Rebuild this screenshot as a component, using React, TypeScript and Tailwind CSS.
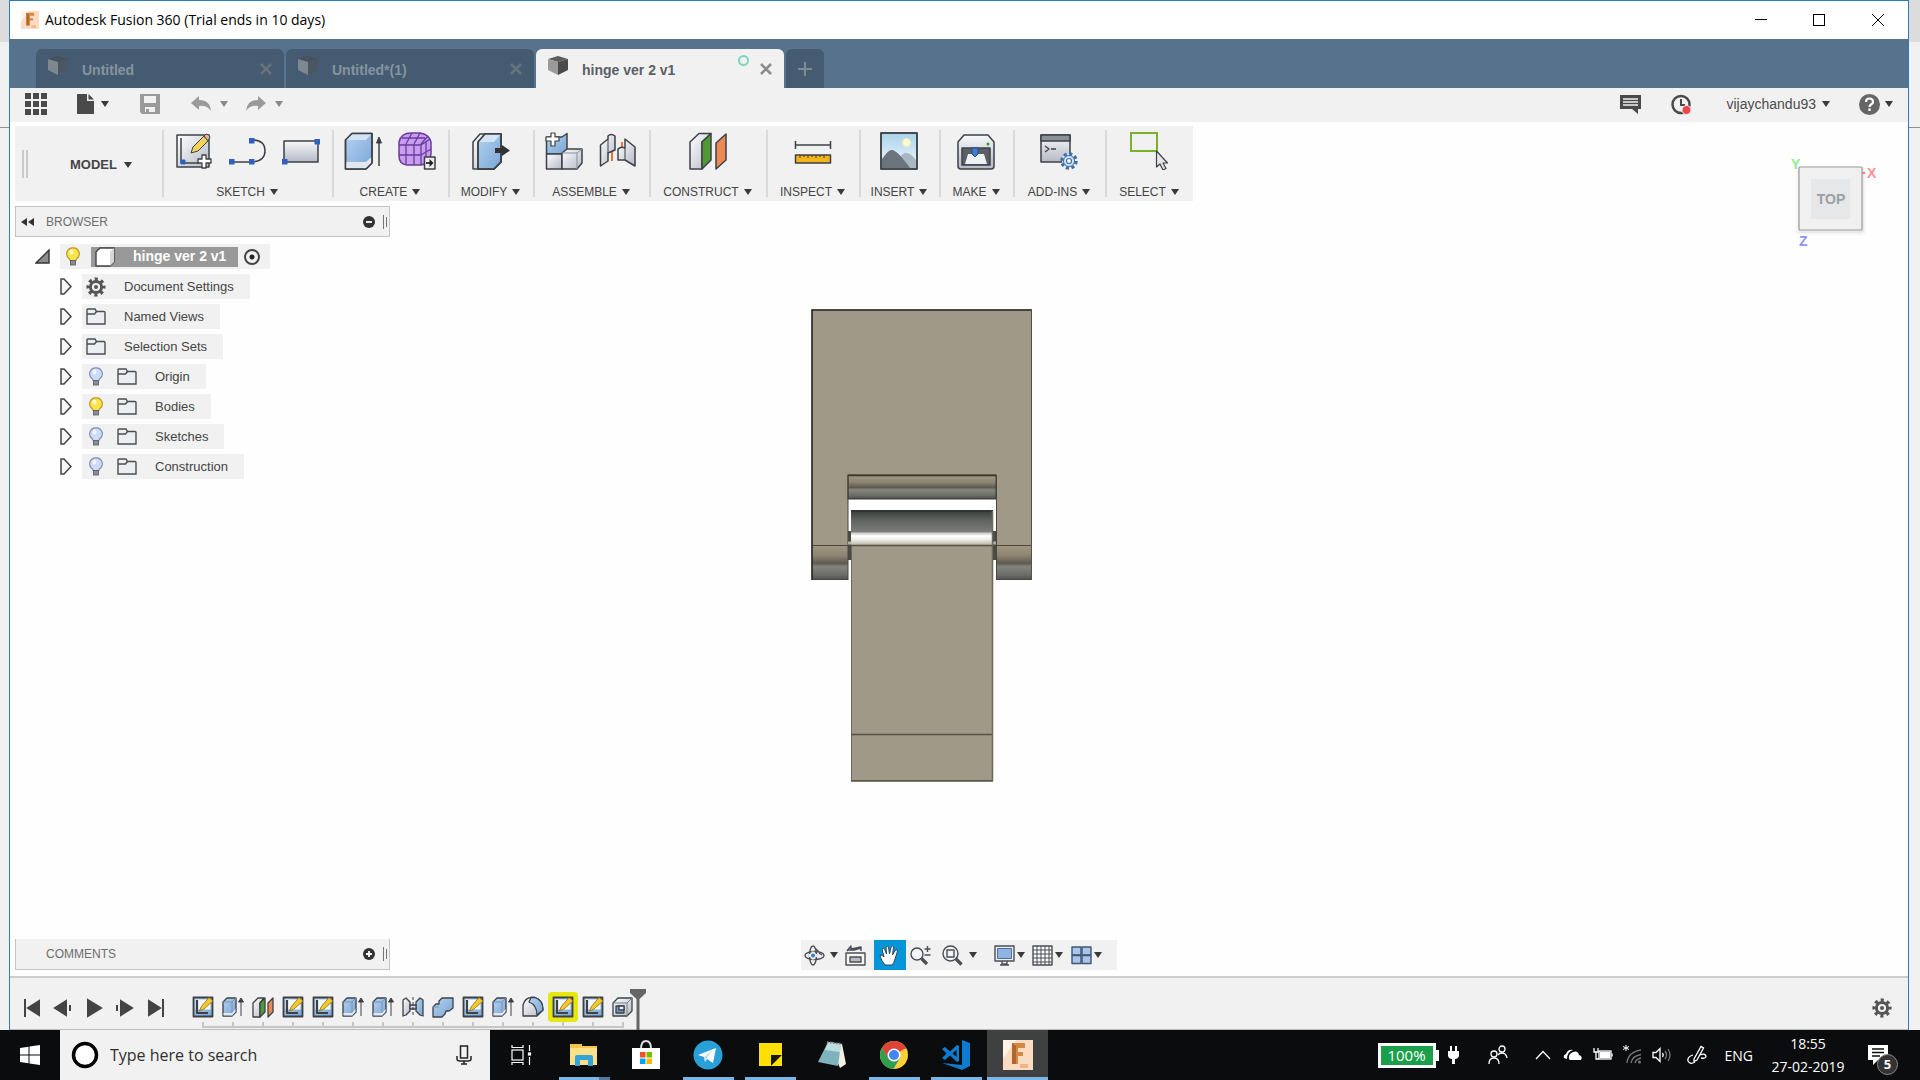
import React, { useState } from "react";

const INK = "#3d4147";

type IconProps = { className?: string };

const Defs = () => (
    <svg className="absolute h-0 w-0" aria-hidden="true">
        <defs>
            <linearGradient id="steel" x1="0" y1="0" x2="1" y2="1">
                <stop offset="0" stopColor="#ffffff" />
                <stop offset="1" stopColor="#b4b9c6" />
            </linearGradient>
            <linearGradient id="steelDown" x1="0" y1="0" x2="0" y2="1">
                <stop offset="0" stopColor="#f8f8fa" />
                <stop offset="1" stopColor="#b4b9c6" />
            </linearGradient>
            <linearGradient id="blue" x1="0" y1="0" x2="1" y2="1">
                <stop offset="0" stopColor="#b5d3ef" />
                <stop offset="1" stopColor="#79a5d6" />
            </linearGradient>
            <linearGradient id="sky" x1="0" y1="0" x2="0" y2="1">
                <stop offset="0" stopColor="#a9d3ec" />
                <stop offset="1" stopColor="#f2f8fa" />
            </linearGradient>
            <linearGradient id="ears" x1="0" y1="0" x2="0" y2="1">
                <stop offset="0" stopColor="#a39883" />
                <stop offset="0.3" stopColor="#8d8473" />
                <stop offset="0.52" stopColor="#5f5a50" />
                <stop offset="0.62" stopColor="#858580" />
                <stop offset="0.85" stopColor="#6c6d68" />
                <stop offset="1" stopColor="#4e504c" />
            </linearGradient>
            <linearGradient id="barrel" x1="0" y1="0" x2="0" y2="1">
                <stop offset="0" stopColor="#363b38" />
                <stop offset="0.3" stopColor="#626562" />
                <stop offset="0.6" stopColor="#7b7c79" />
                <stop offset="0.64" stopColor="#c9c8c4" />
                <stop offset="0.72" stopColor="#ffffff" />
                <stop offset="0.82" stopColor="#efeeea" />
                <stop offset="1" stopColor="#b3aa9a" />
            </linearGradient>
        </defs>
    </svg>
);

const Caret = ({ className = "fill-[#3a3a3a]" }: IconProps) => (
    <svg className={`h-[6px] w-[8px] shrink-0 ${className}`} viewBox="0 0 8 6">
        <path d="M0 0H8L4 6Z" />
    </svg>
);

/* ---------- ribbon icons, 38 x 38 ---------- */

const Big = ({ children }: { children: React.ReactNode }) => (
    <svg className="h-[38px] w-[38px]" viewBox="0 0 38 38" fill="none" stroke={INK} strokeWidth="1.5" strokeLinejoin="round">
        {children}
    </svg>
);

const SketchIcon = () => (
    <Big>
        <rect x="3" y="3" width="32" height="32" fill="url(#steel)" />
        <path d="M7 6V31H25" />
        <rect x="7" y="28" width="4" height="4" fill="#2f62c0" stroke="#2f62c0" strokeWidth="1" />
        <path d="M19 15L30 4L34 9L24 19L17 21Z" fill="#f3d25a" strokeWidth="1" />
        <path d="M30 4L32 2Q35 2 36 5L34 9Z" fill="#e9b39a" strokeWidth="1" />
        <path d="M28 23H32V27H37V31H32V36H28V31H24V27H28Z" fill="#fff" strokeWidth="1.3" />
    </Big>
);

const LineIcon = () => (
    <Big>
        <path d="M2 30H24Q37 29 37 19Q37 8 24 8" />
        <g fill="#2f62c0" stroke="none">
            <rect x="1" y="27" width="5.500" height="5.500" />
            <rect x="21" y="27" width="5.500" height="5.500" />
            <rect x="21" y="6" width="5.500" height="5.500" />
        </g>
    </Big>
);

const RectIcon = () => (
    <Big>
        <rect x="2" y="9" width="34" height="21" fill="url(#steelDown)" />
        <g fill="#2f62c0" stroke="none">
            <rect x="0" y="27" width="5.500" height="5.500" />
            <rect x="32.500" y="7" width="5.500" height="5.500" />
        </g>
    </Big>
);

const ExtrudeIcon = () => (
    <Big>
        <path d="M1.500 8L8 1.500H28V31L22 37H1.500Z" fill="url(#blue)" />
        <path d="M2 30H22L27.500 25V31L22 36.500H2Z" fill="#e3e7ee" stroke="none" />
        <path d="M1.500 8L8 1.500H28L22 8Z" fill="#d2e4f5" stroke="none" />
        <path d="M1.500 8L8 1.500H28V31L22 37H1.500Z" />
        <path d="M35 8V34" />
        <path d="M32.500 11L35 5L37.500 11Z" fill={INK} strokeWidth="1" />
    </Big>
);

const FormIcon = () => (
    <Big>
        <path d="M1 10Q3 1 13 1H22Q31 2 33 10V22Q32 32 23 33H9Q1 32 1 24Z" fill="#c79df0" stroke="#6c3b9c" />
        <path d="M1 13H23L32 7M1 23H23L33 17M8 12V33M16 12V33M23 12V33M8 12L14 1M16 12L22 1M23 12L30 4M28 9V30M4 6H27" stroke="#6c3b9c" strokeWidth="1.3" />
        <rect x="26.500" y="25" width="10.500" height="12" fill="#eee" />
        <path d="M28 31H33" strokeWidth="2" />
        <path d="M31.500 27L35.500 31L31.500 35Z" fill="#222" stroke="none" />
    </Big>
);

const PressPullIcon = () => (
    <Big>
        <path d="M1 10L8 2H29V30L22 37H1Z" fill="url(#steel)" />
        <path d="M6 10L13 2H29V30L22 37H6Z" fill="url(#blue)" />
        <path d="M6 10L13 2H29L22 10Z" fill="#d2e4f5" stroke="none" />
        <path d="M6 10L13 2H29V30L22 37H6Z" />
        <path d="M23 16H30V13L38 18.500L30 24V21H23Z" fill="#333" stroke="none" />
    </Big>
);

const NewComponentIcon = () => (
    <Big>
        <path d="M1.500 5H17L22 1.500V19L17 22H1.500Z" fill="url(#blue)" />
        <path d="M1.500 22H17V37H1.500Z" fill="url(#steel)" />
        <path d="M17 21L22 17H37V31L32 37H17Z" fill="url(#steel)" />
        <path d="M17 21H32L37 17M32 21V37" stroke="#8b8f98" strokeWidth="1" />
        <path d="M6 1H10V5H14V9H10V14H6V9H1V5H6Z" fill="#fff" strokeWidth="1.200" />
    </Big>
);

const JointIcon = () => (
    <Big>
        <path d="M13 16V29M23 10V22" stroke="#e8762c" strokeWidth="2" />
        <path d="M1.500 13L9 7V4Q12 1 16 4V18L9 21V29L1.500 34Z" fill="url(#steel)" />
        <path d="M9 7V21" strokeWidth="1" />
        <path d="M26 7L36 15V34L26 28H19V17Q22 14 26 16Z" fill="url(#steel)" />
        <path d="M26 16V28" strokeWidth="1" />
    </Big>
);

const PlaneIcon = () => (
    <Big>
        <path d="M1 10L10 1.500H22L13 10V37H1Z" fill="url(#steel)" />
        <path d="M13 10L22 1.500V28L13 37Z" fill="#4f9a35" />
        <path d="M27 11L37 2V28L27 37Z" fill="#eb8a55" />
    </Big>
);

const MeasureIcon = () => (
    <Big>
        <path d="M1.500 9V17M36.500 9V17M2 13H36" />
        <rect x="1.500" y="23" width="35" height="8" fill="#f2b418" />
        <path d="M6 23V26M10 23V25M14 23V26M18 23V25M22 23V26M26 23V25M30 23V26" strokeWidth="1" />
    </Big>
);

const InsertIcon = () => (
    <Big>
        <rect x="1" y="1" width="36" height="36" fill="url(#sky)" />
        <circle cx="26.500" cy="10.500" r="4" fill="#fffbd0" stroke="#f6eeb0" strokeWidth="1" />
        <path d="M15 32Q22 20 26 21Q30 20 36 28V36H15Z" fill="#a9b7c2" stroke="none" />
        <path d="M2 27Q9 17 12 18Q17 18 30 36H2Z" fill="#6b737c" stroke="none" />
        <rect x="1" y="1" width="36" height="36" />
    </Big>
);

const MakeIcon = () => (
    <Big>
        <path d="M1 10L7 3H31L37 10V34Q37 37 34 37H4Q1 37 1 34Z" fill="url(#steelDown)" />
        <rect x="5" y="16" width="28" height="17" fill="#5b6066" />
        <path d="M11 22H27L30 32H8Z" fill="#eef1f4" stroke="none" />
        <path d="M15 16H21V22L18 25L15 22Z" fill="#3f7fce" stroke="#224f8c" strokeWidth="1" />
        <circle cx="31" cy="12" r="1.500" fill="#2c9a2c" stroke="none" />
    </Big>
);

const AddInsIcon = () => (
    <Big>
        <rect x="1" y="3" width="29" height="27" fill="url(#steelDown)" />
        <rect x="1" y="3" width="29" height="6" fill="#8b8f96" />
        <path d="M5 14L9 17L5 20M11 17H16" strokeWidth="1.300" />
        <circle cx="29" cy="29" r="7" fill="#d6e6f5" stroke="#3e6ea8" strokeWidth="3.500" strokeDasharray="3 2.500" />
        <circle cx="29" cy="29" r="5.500" fill="#d6e6f5" stroke="#3e6ea8" strokeWidth="1" />
        <circle cx="29" cy="29" r="2.500" fill="#fff" stroke="#3e6ea8" strokeWidth="1.200" />
    </Big>
);

const SelectIcon = () => (
    <Big>
        <rect x="1" y="1" width="26" height="18" stroke="#7cb22b" strokeWidth="2" strokeLinejoin="miter" />
        <path d="M26.500 19V35L30 32L33 38L36 36.500L33 31H37.500Z" fill="#e6e7ea" strokeWidth="1.200" />
    </Big>
);

type Group = { label: string; width: string; icons: React.FC[] };

const ribbon: Group[] = [
    { label: "SKETCH", width: "w-[170px]", icons: [SketchIcon, LineIcon, RectIcon] },
    { label: "CREATE", width: "w-[116px]", icons: [ExtrudeIcon, FormIcon] },
    { label: "MODIFY", width: "w-[85px]", icons: [PressPullIcon] },
    { label: "ASSEMBLE", width: "w-[116px]", icons: [NewComponentIcon, JointIcon] },
    { label: "CONSTRUCT", width: "w-[117px]", icons: [PlaneIcon] },
    { label: "INSPECT", width: "w-[93px]", icons: [MeasureIcon] },
    { label: "INSERT", width: "w-[80px]", icons: [InsertIcon] },
    { label: "MAKE", width: "w-[74px]", icons: [MakeIcon] },
    { label: "ADD-INS", width: "w-[92px]", icons: [AddInsIcon] },
    { label: "SELECT", width: "w-[88px]", icons: [SelectIcon] },
];

/* ---------- title bar and tabs ---------- */

const FusionMark = ({ className = "" }: IconProps) => (
    <svg className={className} viewBox="0 0 30 30">
        <rect width="30" height="30" fill="#fbdcc3" />
        <path d="M0 0H14L0 18Z" fill="#fff2e6" />
        <path d="M9 3H22V8H15V12H20V16H15V24H9Z" fill="#d58745" />
        <path d="M9 3L13 6V24H9Z" fill="#b0662c" />
        <path d="M17 24H25V28H17Z" fill="#edb48b" />
    </svg>
);

const TitleBar = () => (
    <header className="flex h-[38px] items-center bg-white pl-[11px] font-['Open_Sans','Noto_Sans',sans-serif]">
        <FusionMark className="h-[18px] w-[18px]" />
        <h1 className="ml-[6px] pb-[2px] text-[14px] text-black">Autodesk Fusion 360 (Trial ends in 10 days)</h1>
        <div className="ml-auto flex h-full">
            <button aria-label="Minimize" className="flex w-[58px] items-center justify-center">
                <svg className="h-3 w-3" viewBox="0 0 12 12"><path d="M0 5.500H12" stroke="#000" /></svg>
            </button>
            <button aria-label="Maximize" className="flex w-[58px] items-center justify-center">
                <svg className="h-3 w-3" viewBox="0 0 12 12"><rect x=".5" y=".5" width="11" height="11" fill="none" stroke="#000" /></svg>
            </button>
            <button aria-label="Close" className="flex w-[60px] items-center justify-center">
                <svg className="h-3 w-3" viewBox="0 0 12 12"><path d="M0 0L12 12M12 0L0 12" stroke="#000" /></svg>
            </button>
        </div>
    </header>
);

const CloseMark = ({ className = "" }: IconProps) => (
    <svg className={`h-[12px] w-[12px] ${className}`} viewBox="0 0 12 12">
        <path d="M1 1L11 11M11 1L1 11" strokeWidth="2.600" fill="none" />
    </svg>
);

const DocCube = ({ active }: { active: boolean }) => (
    <svg className="mb-2 h-5 w-5" viewBox="0 0 20 20">
        <path d="M0 3L10 0L20 3L10 6Z" fill={active ? "#5c5c5c" : "#46525e"} />
        <path d="M0 3L10 6V19L0 14Z" fill={active ? "#9a9a9a" : "#7d8890"} />
        <path d="M20 3L10 6V19L20 14Z" fill={active ? "#4a4a4a" : "#4b5661"} />
    </svg>
);

const tabs = ["Untitled", "Untitled*(1)", "hinge ver 2 v1"];

const TabBar = () => {
    const [current, setCurrent] = useState(2);
    return (
        <nav className="flex h-[49px] items-end gap-[2px] bg-[#56728c] pl-[26px]">
            {tabs.map((name, i) => {
                const active = i === current;
                return (
                    <div
                        key={name}
                        className={`flex h-[39px] w-[248px] items-center rounded-t-md pr-[12px] pl-[12px] ${active ? "bg-[#f1f1f2] text-[#5b5f66]" : "bg-[#445b71] text-[#8694a1]"}`}
                    >
                        <button className="flex h-full flex-1 items-center gap-[14px] pt-[3px] text-left text-[14px] font-bold" onClick={() => setCurrent(i)}>
                            <DocCube active={active} />
                            {name}
                        </button>
                        {active && <span className="mr-[11px] mb-[16px] h-[11px] w-[11px] rounded-full border-2 border-[#7fd6bd]" />}
                        <button aria-label={`Close ${name}`}>
                            <CloseMark className={active ? "stroke-[#8b8b8b]" : "stroke-[#66737f]"} />
                        </button>
                    </div>
                );
            })}
            <button aria-label="New design" className="flex h-[39px] w-[38px] items-center justify-center rounded-t-md bg-[#445b71]">
                <svg className="h-[14px] w-[14px]" viewBox="0 0 14 14"><path d="M7 0V14M0 7H14" stroke="#7d8b98" strokeWidth="2" /></svg>
            </button>
        </nav>
    );
};

const QuickBar = () => (
    <div className="flex h-[34px] items-center bg-[#f1f1f1] pr-[15px] pb-[2px] pl-[15px]">
        <button aria-label="Data panel">
            <svg className="h-[22px] w-[22px] fill-[#4a4a4a]" viewBox="0 0 22 22">
                {[0, 8, 16].map((y) => [0, 8, 16].map((x) => <rect key={`${x}-${y}`} x={x} y={y} width="6" height="6" />))}
            </svg>
        </button>
        <button aria-label="File" className="ml-[30px] flex items-center gap-[7px]">
            <svg className="h-[20px] w-[17px] fill-[#4a4a4a]" viewBox="0 0 17 20">
                <path d="M0 0H10V7H17V20H0Z" />
                <path d="M11.500 0L17 5.500H11.500Z" />
            </svg>
            <Caret />
        </button>
        <button aria-label="Save" className="ml-[31px]">
            <svg className="h-[20px] w-[20px]" viewBox="0 0 20 20">
                <path fillRule="evenodd" fill="#9a9a9a" d="M0 0H20V20H2L0 18ZM4 2V9H16V2ZM5 13V18H15V13Z" />
                <rect x="6" y="15" width="3" height="3" fill="#9a9a9a" />
            </svg>
        </button>
        <button aria-label="Undo" className="ml-[31px] flex items-center gap-[9px]">
            <svg className="h-[16px] w-[20px] fill-[#9a9a9a]" viewBox="0 0 20 16">
                <path d="M8 0V4Q19 4 20 15Q16 9 8 10V14L0 7Z" />
            </svg>
            <Caret className="fill-[#8a8a8a]" />
        </button>
        <button aria-label="Redo" className="ml-[18px] flex items-center gap-[9px]">
            <svg className="h-[16px] w-[20px] fill-[#9a9a9a]" viewBox="0 0 20 16">
                <path d="M12 0V4Q1 4 0 15Q4 9 12 10V14L20 7Z" />
            </svg>
            <Caret className="fill-[#8a8a8a]" />
        </button>
        <button aria-label="Notifications" className="ml-auto">
            <svg className="h-[20px] w-[21px]" viewBox="0 0 21 20">
                <path d="M0 1H21V15H18V20L12 15H0Z" fill="#4a4a4a" />
                <path d="M3 5H18M3 8H18M3 11H18" stroke="#f1f1f1" strokeWidth="1.300" />
            </svg>
        </button>
        <button aria-label="Job status" className="ml-[30px]">
            <svg className="h-[21px] w-[21px]" viewBox="0 0 21 21" fill="none" stroke="#4a4a4a">
                <circle cx="10" cy="10.500" r="8.500" strokeWidth="2.500" />
                <path d="M10 5V11H14" strokeWidth="2" />
                <circle cx="15.500" cy="16" r="4.500" fill="#ee4450" stroke="#f1f1f1" />
            </svg>
        </button>
        <button className="ml-[34px] flex items-center gap-[6px] text-[14px] text-[#4c4c4c]">
            vijaychandu93 <Caret />
        </button>
        <button aria-label="Help" className="ml-[29px] flex items-center gap-[5px]">
            <svg className="h-[21px] w-[21px]" viewBox="0 0 21 21">
                <circle cx="10.500" cy="10.500" r="10.500" fill="#666" />
                <path d="M7 8Q7 4.500 10.500 4.500T14 8Q14 9.500 12 10.500Q10.500 11.500 10.500 13" fill="none" stroke="#fff" strokeWidth="2.200" />
                <rect x="9.300" y="14.500" width="2.400" height="2.400" fill="#fff" />
            </svg>
            <Caret />
        </button>
    </div>
);

const Ribbon = () => (
    <div className="ml-[5px] flex h-[75px] w-fit bg-[#f1f1f1]">
        <div className="flex w-[147px] items-center">
            <span className="ml-[7px] h-[28px] w-[6px] border-x-2 border-[#c9c9c9]" />
            <button className="mt-[2px] ml-[42px] flex items-center gap-[7px] text-[13px] font-bold text-[#444]">
                MODEL <Caret />
            </button>
        </div>
        {ribbon.map((g) => (
            <div key={g.label} className={`flex items-stretch py-[4px] pr-[2px] ${g.width}`}>
                <span className="w-[2px] bg-[#d9d9d9]" />
                <div className="flex flex-1 flex-col items-center">
                    <div className="mt-[2px] flex gap-[16px]">
                        {g.icons.map((Icon, i) => (
                            <button key={i} aria-label={`${g.label} tool ${i + 1}`}>
                                <Icon />
                            </button>
                        ))}
                    </div>
                    <button className="mt-[14px] flex items-center gap-[5px] text-[12px] leading-[16px] whitespace-nowrap text-[#444]">
                        {g.label} <Caret />
                    </button>
                </div>
            </div>
        ))}
    </div>
);

/* ---------- browser tree ---------- */

const Bulb = ({ on }: { on: boolean }) => (
    <svg className="h-[19px] w-[14px]" viewBox="0 0 14 19">
        <path d="M7 .8A6 6 0 0 0 3 11.500L4.500 14H9.500L11 11.500A6 6 0 0 0 7 .8Z" fill={on ? "#fbe34a" : "#cfdcf6"} stroke={on ? "#b89a2c" : "#7f8fb5"} strokeWidth="1.200" />
        <ellipse cx="5.500" cy="5" rx="2" ry="2.500" fill="#fff" opacity=".7" />
        <rect x="4.500" y="13.500" width="5" height="4.500" fill="#8a8d93" stroke="#55585e" strokeWidth=".8" />
    </svg>
);

const Folder = () => (
    <svg className="h-[17px] w-[20px]" viewBox="0 0 20 17" fill="none" stroke="#4a4d53" strokeWidth="1.400">
        <path d="M1 16V1.500Q1 1 2 1H9L10.500 3.500H18Q19 3.500 19 4.500V16Z" fill="#eceef2" />
        <path d="M1 6H8.500L10.500 3.500" />
    </svg>
);

const Gear = ({ className = "" }: IconProps) => (
    <svg className={className} viewBox="0 0 20 20" fill="none" stroke="#555">
        <circle cx="10" cy="10" r="8" strokeWidth="3.200" strokeDasharray="3.142 3.142" strokeDashoffset="1.571" />
        <circle cx="10" cy="10" r="5.600" strokeWidth="3" />
        <circle cx="10" cy="10" r="2" fill="#555" stroke="none" />
    </svg>
);

const Grip = () => (
    <svg className="h-[14px] w-[4px]" viewBox="0 0 4 14"><path d="M.5 0V14M3.500 2V12" stroke="#777" /></svg>
);

const rows = [
    { name: "Document Settings", kind: "gear" },
    { name: "Named Views", kind: "folder" },
    { name: "Selection Sets", kind: "folder" },
    { name: "Origin", kind: "off" },
    { name: "Bodies", kind: "on" },
    { name: "Sketches", kind: "off" },
    { name: "Construction", kind: "off" },
];

const BrowserPanel = () => (
    <aside className="mt-[5px] ml-[5px] w-[375px]">
        <div className="flex h-[31px] items-center border border-[#c4c4c4] bg-[#f1f1f1] pr-[2px] pl-[5px]">
            <button aria-label="Collapse browser">
                <svg className="h-[8px] w-[13px] fill-[#333]" viewBox="0 0 13 8"><path d="M6 0V8L0 4ZM13 0V8L7 4Z" /></svg>
            </button>
            <h2 className="ml-[12px] text-[12px] text-[#6d6d6d]">BROWSER</h2>
            <button aria-label="Browser options" className="ml-auto">
                <svg className="h-[12px] w-[12px]" viewBox="0 0 12 12"><circle cx="6" cy="6" r="6" fill="#333" /><path d="M3 6H9" stroke="#fff" strokeWidth="1.800" /></svg>
            </button>
            <span className="ml-[8px]"><Grip /></span>
        </div>
        <ul className="mt-[7px] flex flex-col gap-[5px] text-[13px] text-[#444]">
            <li className="flex h-[25px] items-center pl-[20px]">
                <button aria-label="Collapse hinge ver 2 v1">
                    <svg className="h-[15px] w-[15px]" viewBox="0 0 15 15"><path d="M1 14L14 1V14Z" fill="#8c8c8c" stroke="#333" strokeWidth="1.400" /></svg>
                </button>
                <div className="ml-[10px] flex h-full items-center bg-[#f1f1f1] pr-[10px] pl-[6px]">
                    <Bulb on />
                    <button className="ml-[11px] flex h-[20px] items-center gap-[18px] bg-[#999] pr-[12px] pl-[4px] text-[14px] font-bold text-white">
                        <svg className="h-[20px] w-[20px]" viewBox="0 0 20 20">
                            <path d="M1 5L5 1H19V15L15 19H1Z" fill="#fff" stroke="#444" strokeWidth="1.400" />
                            <path d="M15 19V5L19 1V15Z" fill="#d5d7db" />
                        </svg>
                        hinge ver 2 v1
                    </button>
                    <input type="radio" aria-label="Activate component" defaultChecked className="ml-[6px] h-4 w-4 appearance-none rounded-full border-2 border-[#444] bg-[radial-gradient(circle,#222_0_2px,#f1f1f1_3px)]" />
                </div>
            </li>
            {rows.map((r) => (
                <li key={r.name} className="flex h-[25px] items-center pl-[45px]">
                    <button aria-label={`Expand ${r.name}`}>
                        <svg className="h-[17px] w-[12px]" viewBox="0 0 12 17"><path d="M1 1H4L11 8.500L4 16H1Z" fill="#f6f6f6" stroke="#444" strokeWidth="1.500" /></svg>
                    </button>
                    <button className="ml-[10px] flex h-full items-center bg-[#f1f1f1] pr-[16px] pl-[4px]">
                        {r.kind === "gear" && <Gear className="h-5 w-5" />}
                        {(r.kind === "on" || r.kind === "off") && <span className="mr-[14px] ml-[3px]"><Bulb on={r.kind === "on"} /></span>}
                        {r.kind !== "gear" && <Folder />}
                        <span className="ml-[18px]">{r.name}</span>
                    </button>
                </li>
            ))}
        </ul>
    </aside>
);

/* ---------- viewport ---------- */

const Hinge = () => (
    <svg className="absolute top-[187px] left-[801px] h-[474px] w-[222px]" viewBox="0 0 222 474">
        <path d="M1 .5H220.500V236H186V166H37V236H1Z" fill="#a09987" />
        <rect x="1" y="236" width="36" height="35" fill="url(#ears)" />
        <rect x="186" y="236" width="35" height="35" fill="url(#ears)" />
        <rect x="37" y="166" width="148" height="24" fill="url(#ears)" stroke="#38352f" strokeWidth="1" />
        <path d="M37 166.500H185" stroke="#38352f" strokeWidth="1.500" />
        <path d="M37 166V271M185.500 166V271" stroke="#4a473f" />
        <g fill="#4a4a45">
            <rect x="37" y="222" width="4" height="29" />
            <rect x="181" y="222" width="4" height="29" />
        </g>
        <path d="M37 234H41M181 234H185" stroke="#b5b0a4" strokeWidth="3" />
        <rect x="40" y="201" width="142" height="36" fill="url(#barrel)" />
        <path d="M40 202H182" stroke="#2f3431" strokeWidth="2" />
        <rect x="40.500" y="236.500" width="141" height="235" fill="#a09987" stroke="#6d685d" />
        <path d="M40 236.500H182M40 425.500H182M40 472H182" stroke="#555146" strokeWidth="1.500" />
        <path d="M181.500 202V472" stroke="#6d685d" strokeWidth="1.500" />
        <path d="M1 236.500H37M186 236.500H221M1 270.500H37M186 270.500H221" stroke="#4a473f" />
        <path d="M1 271V1H221" fill="none" stroke="#222" strokeWidth="1.600" />
        <path d="M220.500 1V271" stroke="#55524a" />
    </svg>
);

const ViewCube = () => (
    <svg className="absolute top-[28px] right-[13px] h-[104px] w-[110px] font-['Liberation_Sans',Arial,sans-serif]" viewBox="0 0 110 104">
        <text x="6" y="19" fontSize="14" fontWeight="bold" fill="#8ff08f">Y</text>
        <text x="82" y="28" fontSize="14" fontWeight="bold" fill="#ff8f96">X</text>
        <text x="14" y="96" fontSize="14" fontWeight="bold" fill="#9292f4">Z</text>
        <rect x="11" y="16" width="70" height="69" rx="4" fill="#000" opacity=".03" />
        <rect x="13" y="17" width="66" height="66" rx="3" fill="#000" opacity=".05" />
        <rect x="14" y="17" width="63" height="63" rx="1" fill="#f0f0f0" stroke="#9d9d9d" strokeWidth="1.200" />
        <path d="M77 23H80" stroke="#ff7d86" strokeWidth="2" />
        <rect x="26" y="29" width="39" height="40" fill="#e5e7e9" />
        <text x="46" y="54" fontSize="14" fontWeight="bold" textAnchor="middle" fill="#9a9fa6">TOP</text>
    </svg>
);

const Small = ({ children }: { children: React.ReactNode }) => (
    <svg className="h-[21px] w-[21px]" viewBox="0 0 21 21" fill="none" stroke="#4a4d53" strokeWidth="1.400" strokeLinejoin="round">
        {children}
    </svg>
);

const NavBar = () => (
    <div className="flex h-[30px] w-[316px] items-center bg-[#f1f1f1] pl-[3px]">
        <button aria-label="Orbit" className="flex items-center gap-[5px]">
            <Small>
                <ellipse cx="10.500" cy="10.500" rx="9.500" ry="4" />
                <ellipse cx="9" cy="10.500" rx="3.500" ry="9.500" />
                <path d="M5 10.500H13M9 6.500V14.500" stroke="#f1f1f1" strokeWidth="3" />
                <circle cx="9" cy="10.500" r="2" fill="#2f7fd6" stroke="none" />
                <path d="M12 4L14 6L11 7M18 10L15 8" />
            </Small>
            <Caret />
        </button>
        <button aria-label="Look at" className="ml-[7px]">
            <Small>
                <path d="M1 8H20V20H1Z" fill="#f6f6f6" />
                <rect x="5" y="12" width="11" height="5" fill="#b9bcc4" />
                <path d="M2 6L6 1V4L16 2V6M2 5H9L16 3" />
            </Small>
        </button>
        <button aria-label="Pan" className="ml-[8px] flex h-full w-[32px] items-center justify-center bg-[#0696d7] pr-[3px]">
            <svg className="h-[21px] w-[20px]" viewBox="0 0 20 21">
                <path d="M6 20Q2 15 1 11Q1 9 4 11L5 12L3 4Q4 2 5.500 4L7.500 9L7 2Q8 0 9.500 2L10.500 9L12 2Q13.500 0 14.500 2L13.500 10L16.500 5Q18.500 4 18.500 6L16 14Q15 18 13 20Z" fill="#fff" stroke="#2b4a63" strokeWidth="1" />
            </svg>
        </button>
        <button aria-label="Zoom" className="ml-[4px]">
            <Small>
                <circle cx="7" cy="9" r="6" fill="#f3f6f9" />
                <path d="M11.500 13.500L17 19" strokeWidth="3.200" />
                <path d="M14.500 4H20.500M17.500 1V7M14.500 10H20.500" />
            </Small>
        </button>
        <button aria-label="Fit" className="ml-[11px] flex items-center gap-[6px]">
            <Small>
                <circle cx="8.500" cy="8.500" r="7.500" fill="#f3f6f9" />
                <rect x="5" y="5" width="7" height="7" />
                <path d="M14 14L19.500 19.500" strokeWidth="3.200" />
            </Small>
            <Caret />
        </button>
        <button aria-label="Display settings" className="ml-[17px] flex items-center gap-[2px]">
            <Small>
                <rect x="1" y="1" width="19" height="15" fill="#eceef2" />
                <rect x="3.500" y="3.500" width="14" height="10" fill="#8fb4e2" stroke="#4a6fa5" strokeWidth="1" />
                <path d="M8 16V19H13V16M6 20H15" />
            </Small>
            <Caret />
        </button>
        <button aria-label="Grid and snaps" className="ml-[7px] flex items-center gap-[2px]">
            <Small>
                <rect x="1" y="1" width="19" height="19" fill="#fafafa" />
                <path d="M5 1V20M9 1V20M13 1V20M17 1V20M1 5H20M1 9H20M1 13H20M1 17H20" strokeWidth="1" />
            </Small>
            <Caret />
        </button>
        <button aria-label="Viewports" className="ml-[8px] flex items-center gap-[2px]">
            <Small>
                <g fill="#a9c6ea" stroke="#3f5677">
                    <rect x="1" y="2" width="9" height="8" />
                    <rect x="11" y="2" width="9" height="8" />
                    <rect x="1" y="10.500" width="9" height="8" />
                    <rect x="11" y="10.500" width="9" height="8" />
                </g>
            </Small>
            <Caret />
        </button>
    </div>
);

/* ---------- timeline ---------- */

const Step = ({ kind }: { kind: string }) => (
    <svg className="h-[22px] w-[22px]" viewBox="0 0 22 22" fill="none" stroke={INK} strokeWidth="1.300" strokeLinejoin="round">
        {kind === "sketch" && (
            <>
                <rect x="1.500" y="1.500" width="19" height="19" fill="url(#blue)" strokeWidth="1.800" />
                <rect x="3.500" y="3.500" width="15" height="10" fill="#f6f8fa" stroke="none" />
                <path d="M5 4V17H16" strokeWidth="2.200" />
                <path d="M9 11L17 1.500L21 5L12 13L7.500 15Z" fill="#f5c92c" stroke="#8a6d1a" strokeWidth=".8" />
            </>
        )}
        {kind === "extrude" && (
            <>
                <path d="M1 6L5 2H14V16L10 20H1Z" fill="url(#blue)" />
                <path d="M10 20V6L14 2M1 6H10" stroke="#7d94b3" strokeWidth="1" />
                <path d="M1.500 17H10L13.500 13V16L10 19.500H1.500Z" fill="#e3e7ee" stroke="none" />
                <path d="M19 20V4M16.500 6L19 2L21.500 6Z" fill={INK} strokeWidth="1" />
            </>
        )}
        {kind === "plane" && (
            <>
                <path d="M1 7L6 2H12L8 7V21H1Z" fill="url(#steel)" />
                <path d="M8 7L13 2V16L8 21Z" fill="#4f9a35" />
                <path d="M16 7L21 2V16L16 21Z" fill="#eb8a55" />
            </>
        )}
        {kind === "mirror" && (
            <>
                <path d="M1 4L4 2L8 6V15L4 19L1 20Z" fill="url(#steel)" />
                <path d="M21 4L18 2L14 6V15L18 19L21 20Z" fill="url(#blue)" />
                <path d="M8 9H14V13H8Z" fill="#c9d6e6" />
                <path d="M11 1V21" strokeDasharray="3 2" strokeWidth="1" />
            </>
        )}
        {kind === "combine" && (
            <>
                <path d="M7 5L10 2H21V12L17 15H14L13 18L10 21H1V11L4 8H7Z" fill="url(#blue)" />
                <path d="M1 11H7" stroke="#7d94b3" strokeWidth="1" />
            </>
        )}
        {kind === "fillet" && (
            <>
                <path d="M1 20V9Q3 2 9 1.500H13Q21 4 21 14L15 20Z" fill="url(#steel)" />
                <path d="M9 1.500H13Q21 4 21 14L15 19Q15 9 7 6Z" fill="url(#blue)" />
            </>
        )}
        {kind === "shell" && (
            <>
                <path d="M1 7L6 2H20V15L15 20H1Z" fill="url(#steel)" />
                <path d="M1 7H15V20M15 7L20 2" stroke="#7b7f87" strokeWidth="1" />
                <rect x="4" y="10" width="8" height="7" fill="#6b9bd3" />
                <rect x="7" y="10" width="5" height="4" fill="#e8ecf2" />
            </>
        )}
    </svg>
);

const steps = [
    "sketch", "extrude", "plane", "sketch", "sketch", "extrude", "extrude", "mirror",
    "combine", "sketch", "extrude", "fillet", "sketch", "sketch", "shell",
];

const transport = [
    { name: "Go to start", d: "M3 1V19M17 3L6 10L17 17Z" },
    { name: "Step back", d: "M13 3L2 10L13 17ZM17 7V13" },
    { name: "Play", d: "M4 2L17 10L4 18Z" },
    { name: "Step forward", d: "M6 3L17 10L6 17ZM2 7V13" },
    { name: "Go to end", d: "M17 1V19M3 3L14 10L3 17Z" },
];

const Timeline = () => (
    <footer className="flex h-[54px] border-t-2 border-b border-t-[#cdcdcd] border-b-[#bdbdbd] bg-[#f1f1f1] pl-[12px]">
        <div className="flex h-full items-center gap-[11px] pt-[8px]">
            {transport.map((t) => (
                <button key={t.name} aria-label={t.name}>
                    <svg className="h-[20px] w-[20px]" viewBox="0 0 20 20"><path d={t.d} fill="#444" stroke="#444" strokeWidth="2" /></svg>
                </button>
            ))}
        </div>
        <ol className="ml-[22px] flex pt-[14px]">
            {steps.map((kind, i) => (
                <li key={i} className="flex w-[30px] flex-col items-center">
                    <button aria-label={`${kind} ${i + 1}`} className={`flex h-[30px] w-[30px] items-center justify-center rounded-sm ${i === 12 ? "bg-[#e6e610]" : ""}`}>
                        <Step kind={kind} />
                    </button>
                    <span className="h-[4px] w-[2px] bg-[#c6c6c6]" />
                    <span className={`h-[2px] bg-[#c6c6c6] ${i === 0 ? "w-[16px] self-end" : i === 14 ? "w-[16px] self-start" : "w-full"}`} />
                </li>
            ))}
        </ol>
        <svg className="mt-[11px] -ml-[8px] h-[41px] w-[16px]" viewBox="0 0 16 41" fill="#666">
            <path d="M0 0H16V4L9.500 10V41H6.500V10L0 4Z" />
        </svg>
        <button aria-label="Timeline settings" className="mt-[8px] mr-[16px] ml-auto">
            <Gear className="h-5 w-5" />
        </button>
    </footer>
);

/* ---------- Windows taskbar ---------- */

const apps = [
    {
        name: "Task View",
        bar: "none",
        icon: (
            <g fill="none" stroke="#fff" strokeWidth="1.200">
                <rect x="5" y="10" width="11" height="10" />
                <path d="M5 5V7.500H16V5M5 25V22.500H16V25M22.500 5V11M22.500 17V25" />
                <rect x="21.500" y="13" width="2" height="2" fill="#fff" />
            </g>
        ),
    },
    {
        name: "File Explorer",
        bar: "stack",
        icon: (
            <g>
                <path d="M1 4H13V6H28V25H1Z" fill="#f3c64b" />
                <path d="M1 8H28V25H1Z" fill="#fbe08a" />
                <path d="M6 26V17Q6 15 8 15H22Q24 15 24 17V26H19V20H11V26Z" fill="#35a3d6" />
            </g>
        ),
    },
    {
        name: "Microsoft Store",
        bar: "none",
        icon: (
            <g>
                <path d="M10 9Q10 1 15 1T20 9" fill="none" stroke="#ddd" strokeWidth="2" />
                <path d="M1 8H29V29H1Z" fill="#fff" />
                <path d="M9 12H14.500V17.500H9Z" fill="#f25022" />
                <path d="M15.500 12H21V17.500H15.500Z" fill="#7fba00" />
                <path d="M9 18.500H14.500V24H9Z" fill="#00a4ef" />
                <path d="M15.500 18.500H21V24H15.500Z" fill="#ffb900" />
            </g>
        ),
    },
    {
        name: "Telegram",
        bar: "line",
        icon: (
            <g>
                <circle cx="15" cy="15" r="14.500" fill="#2a9fd8" />
                <path d="M5 15L23 8L20 23L14 19L12 22L11 17Z" fill="#fff" />
                <path d="M11 17L20 10L13.500 18.500L12 22Z" fill="#c3dcec" />
            </g>
        ),
    },
    {
        name: "Sticky Notes",
        bar: "line",
        icon: (
            <g>
                <path d="M4 3H27V15L16 26H4Z" fill="#ffe000" />
                <path d="M16 15H27L16 26Z" fill="#16160a" />
                <path d="M27 15V26H16Z" fill="#ffe000" />
            </g>
        ),
    },
    {
        name: "Notepad",
        bar: "none",
        icon: (
            <g>
                <path d="M12 2L25 4L29 24L23 28Z" fill="#f3efe4" />
                <path d="M11 2L24 4L21 26L1 22Z" fill="#7fb3bd" />
                <path d="M11 2L24 4L23 12L8 10Z" fill="#bfdde0" />
                <path d="M10 2L25 4" stroke="#777" strokeWidth="2" strokeDasharray="1.500 1.500" />
            </g>
        ),
    },
    {
        name: "Google Chrome",
        bar: "line",
        icon: (
            <g>
                <circle cx="15" cy="15" r="14" fill="#fdd03b" />
                <path d="M15 15L2.900 8A14 14 0 0 1 27.100 8Z" fill="#de4436" />
                <path d="M15 8.500H27.400L27.100 8A14 14 0 0 0 2.900 8L9 18Z" fill="#de4436" />
                <path d="M2.900 8A14 14 0 0 0 14.500 29L20.600 18.500L15 21.500L9.400 18.300Z" fill="#2f9e4f" />
                <circle cx="15" cy="15" r="6.500" fill="#fff" />
                <circle cx="15" cy="15" r="5" fill="#4285f4" />
            </g>
        ),
    },
    {
        name: "Visual Studio Code",
        bar: "line",
        icon: (
            <g fill="#0f7bd0">
                <path d="M21 0L29 3V26L21 30L1 23L21 25Z" />
                <path fillRule="evenodd" d="M1 9L4 7L9 11.500L16 5L18 6V21L16 22L9 15.500L4 20L1 18L5.500 13.500ZM11.500 13.500L15.500 17V10Z" />
            </g>
        ),
    },
];

const Tray = ({ name, className, children }: { name: string; className: string; children: React.ReactNode }) => (
    <button aria-label={name} className={className}>
        <svg className="h-[20px] w-[20px]" viewBox="0 0 20 20" fill="none" stroke="#fff" strokeWidth="1.300">
            {children}
        </svg>
    </button>
);

const Taskbar = () => (
    <footer className="flex h-[50px] bg-[#0b0c0d] font-['Open_Sans','Noto_Sans',sans-serif] text-white">
        <button aria-label="Start" className="flex w-[60px] items-center justify-center">
            <svg className="h-[20px] w-[20px] fill-white" viewBox="0 0 20 20">
                <path d="M0 3L8.500 1.700V9.500H0ZM9.500 1.500L20 0V9.500H9.500ZM0 10.500H8.500V18.300L0 17ZM9.500 10.500H20V20L9.500 18.500Z" />
            </svg>
        </button>
        <label className="flex w-[430px] items-center bg-[#f1f1f1] pr-[18px] pl-[11px]">
            <svg className="h-[28px] w-[28px]" viewBox="0 0 28 28"><circle cx="14" cy="14" r="11.500" fill="#fff" stroke="#000" strokeWidth="3.500" /></svg>
            <input type="text" aria-label="Search" placeholder="Type here to search" className="ml-[11px] min-w-0 flex-1 bg-transparent text-[16px] text-black outline-none placeholder:text-[#2f2f2f]" />
            <svg className="h-[20px] w-[16px]" viewBox="0 0 16 20" fill="none" stroke="#222" strokeWidth="1.500">
                <rect x="4.500" y="1" width="7" height="12" />
                <path d="M1 11V14Q1 16 4 16H12Q15 16 15 14V11M8 16V19M5 19H11" />
            </svg>
        </label>
        <div className="flex pl-px">
            {apps.map((a) => (
                <button key={a.name} aria-label={a.name} className="flex w-[62px] flex-col items-center justify-between pt-[10px]">
                    <svg className="h-[30px] w-[30px]" viewBox="0 0 30 30">{a.icon}</svg>
                    {a.bar === "line" && <span className="h-[3px] w-[51px] bg-[#7ab5e8]" />}
                    {a.bar === "stack" && <span className="h-[3px] w-[51px] border-r-[11px] border-[#56799a] bg-[#7ab5e8]" />}
                </button>
            ))}
            <button aria-label="Fusion 360" className="flex w-[61px] flex-col items-center justify-between bg-[#3f4040] pt-[10px]">
                <FusionMark className="h-[30px] w-[30px]" />
                <span className="h-[3px] w-full bg-[#7ab5e8]" />
            </button>
        </div>

        <div className="ml-auto flex items-center">
            <span className="flex h-[25px] w-[58px] items-center justify-center border-[3px] border-white bg-[#1c9f4b] text-[15px]">100%</span>
            <span className="h-[11px] w-[3px] bg-white" />
            <svg className="ml-[9px] h-[18px] w-[11px] fill-white" viewBox="0 0 11 18"><path d="M2 0H4V5H7V0H9V5H11V10Q10 13 7 13V18H4V13Q1 13 0 10V5H2Z" /></svg>
            <Tray name="People" className="ml-[29px]">
                <circle cx="6" cy="9" r="3" />
                <circle cx="14" cy="4" r="3" />
                <path d="M1 19Q1 13 6 13T11 19M10 10Q11 8 14 8Q18 8 19 13" />
            </Tray>
            <Tray name="Show hidden icons" className="ml-[25px]"><path d="M3 14L10 6.500L17 14" /></Tray>
            <Tray name="OneDrive" className="ml-[10px]">
                <path d="M7 15H18Q20 11 16 10Q15 5 10 7Q5 9 6 14Z" fill="#fff" stroke="none" />
                <path d="M1 13Q0 10 3 9Q5 4 10 5Q4 7 4 14Z" fill="#fff" stroke="none" />
            </Tray>
            <Tray name="Battery" className="ml-[10px]">
                <rect x="6" y="6" width="12" height="8" />
                <path d="M7.500 7.500H16.500V12.500H7.500ZM19 8.500V11.500" fill="#fff" />
                <path d="M1 3V7H5V3M3 7V14H6" />
            </Tray>
            <Tray name="Network" className="ml-[9px]">
                <path d="M4 0V6M1 1.500L7 4.500M7 1.500L1 4.500" strokeWidth="1" />
                <path d="M5 18Q6 7 19 5M9 18Q10 11 19 9.500M13 18Q14 14 19 13" stroke="#777" />
                <circle cx="17.500" cy="17" r="1.500" fill="#777" stroke="none" />
            </Tray>
            <Tray name="Volume" className="ml-[10px]">
                <path d="M1 7.500H4L8 3.500V16.500L4 12.500H1ZM10.500 8Q12 10 10.500 12" />
                <path d="M13 6Q16 10 13 14M16 4Q20 10 16 16" stroke="#777" />
            </Tray>
            <Tray name="Windows Ink" className="ml-[15px]">
                <path d="M7 14L14 1.500L16.500 3L10 15L7 16.500ZM6 10Q0 12 1 16Q3 20 8 17M13 10Q18 8 19 11Q19 14 14 13" />
            </Tray>
            <span className="ml-[18px] text-[14px]">ENG</span>
            <div className="ml-[16px] flex w-[78px] flex-col text-center text-[14px] leading-[23px] whitespace-nowrap">
                <span>18:55</span>
                <span>27-02-2019</span>
            </div>
            <button aria-label="5 notifications" className="relative mr-[22px] ml-[21px] h-[34px] w-[30px]">
                <svg className="h-[22px] w-[20px]" viewBox="0 0 20 22">
                    <path d="M0 1H20V16H10L5 21V16H0Z" fill="#fff" />
                    <path d="M4 5H16M4 8.500H16M4 12H12" stroke="#0b0c0d" strokeWidth="1.300" />
                </svg>
                <span className="absolute right-0 -bottom-[3px] flex h-[21px] w-[21px] items-center justify-center rounded-full border border-[#8a8a8a] bg-[#333] text-[13px] font-bold">5</span>
            </button>
        </div>
    </footer>
);

const Backdrop = ({ className }: { className: string }) => (
    <div className={`flex flex-col bg-[#f1f1f1] ${className}`}>
        <div className="h-[42px] bg-[#dcdcdc]" />
        <div className="h-[85px] bg-[#f1f1f1]" />
        <div className="h-px bg-[#8f8f8f]" />
    </div>
);

export default function App() {
    return (
        <div className="flex min-h-screen flex-col bg-[#f1f1f1] font-['Liberation_Sans',Arial,sans-serif]">
            <Defs />
            <div className="flex flex-1">
                <Backdrop className="w-[9px]" />
                <div className="flex min-w-0 flex-1 flex-col border-x border-t border-[#2b7bbd] bg-white">
                    <TitleBar />
                    <TabBar />
                    <QuickBar />
                    <main className="relative flex flex-1 flex-col bg-[#fefefe] pt-[4px] pb-[6px]">
                        <Hinge />
                        <ViewCube />
                        <Ribbon />
                        <BrowserPanel />
                        <div className="mt-auto grid grid-cols-[1fr_auto_1fr] items-end">
                            <div className="ml-[5px] flex h-[31px] w-[375px] items-center border border-t-0 border-[#c4c4c4] bg-[#f1f1f1] pr-[2px] pl-[30px]">
                                <h2 className="text-[12px] text-[#6d6d6d]">COMMENTS</h2>
                                <button aria-label="Add comment" className="ml-auto">
                                    <svg className="h-[12px] w-[12px]" viewBox="0 0 12 12"><circle cx="6" cy="6" r="6" fill="#333" /><path d="M3 6H9M6 3V9" stroke="#fff" strokeWidth="1.800" /></svg>
                                </button>
                                <span className="ml-[8px]"><Grip /></span>
                            </div>
                            <NavBar />
                        </div>
                    </main>
                    <Timeline />
                </div>
                <Backdrop className="w-[11px]" />
            </div>
            <Taskbar />
        </div>
    );
}
